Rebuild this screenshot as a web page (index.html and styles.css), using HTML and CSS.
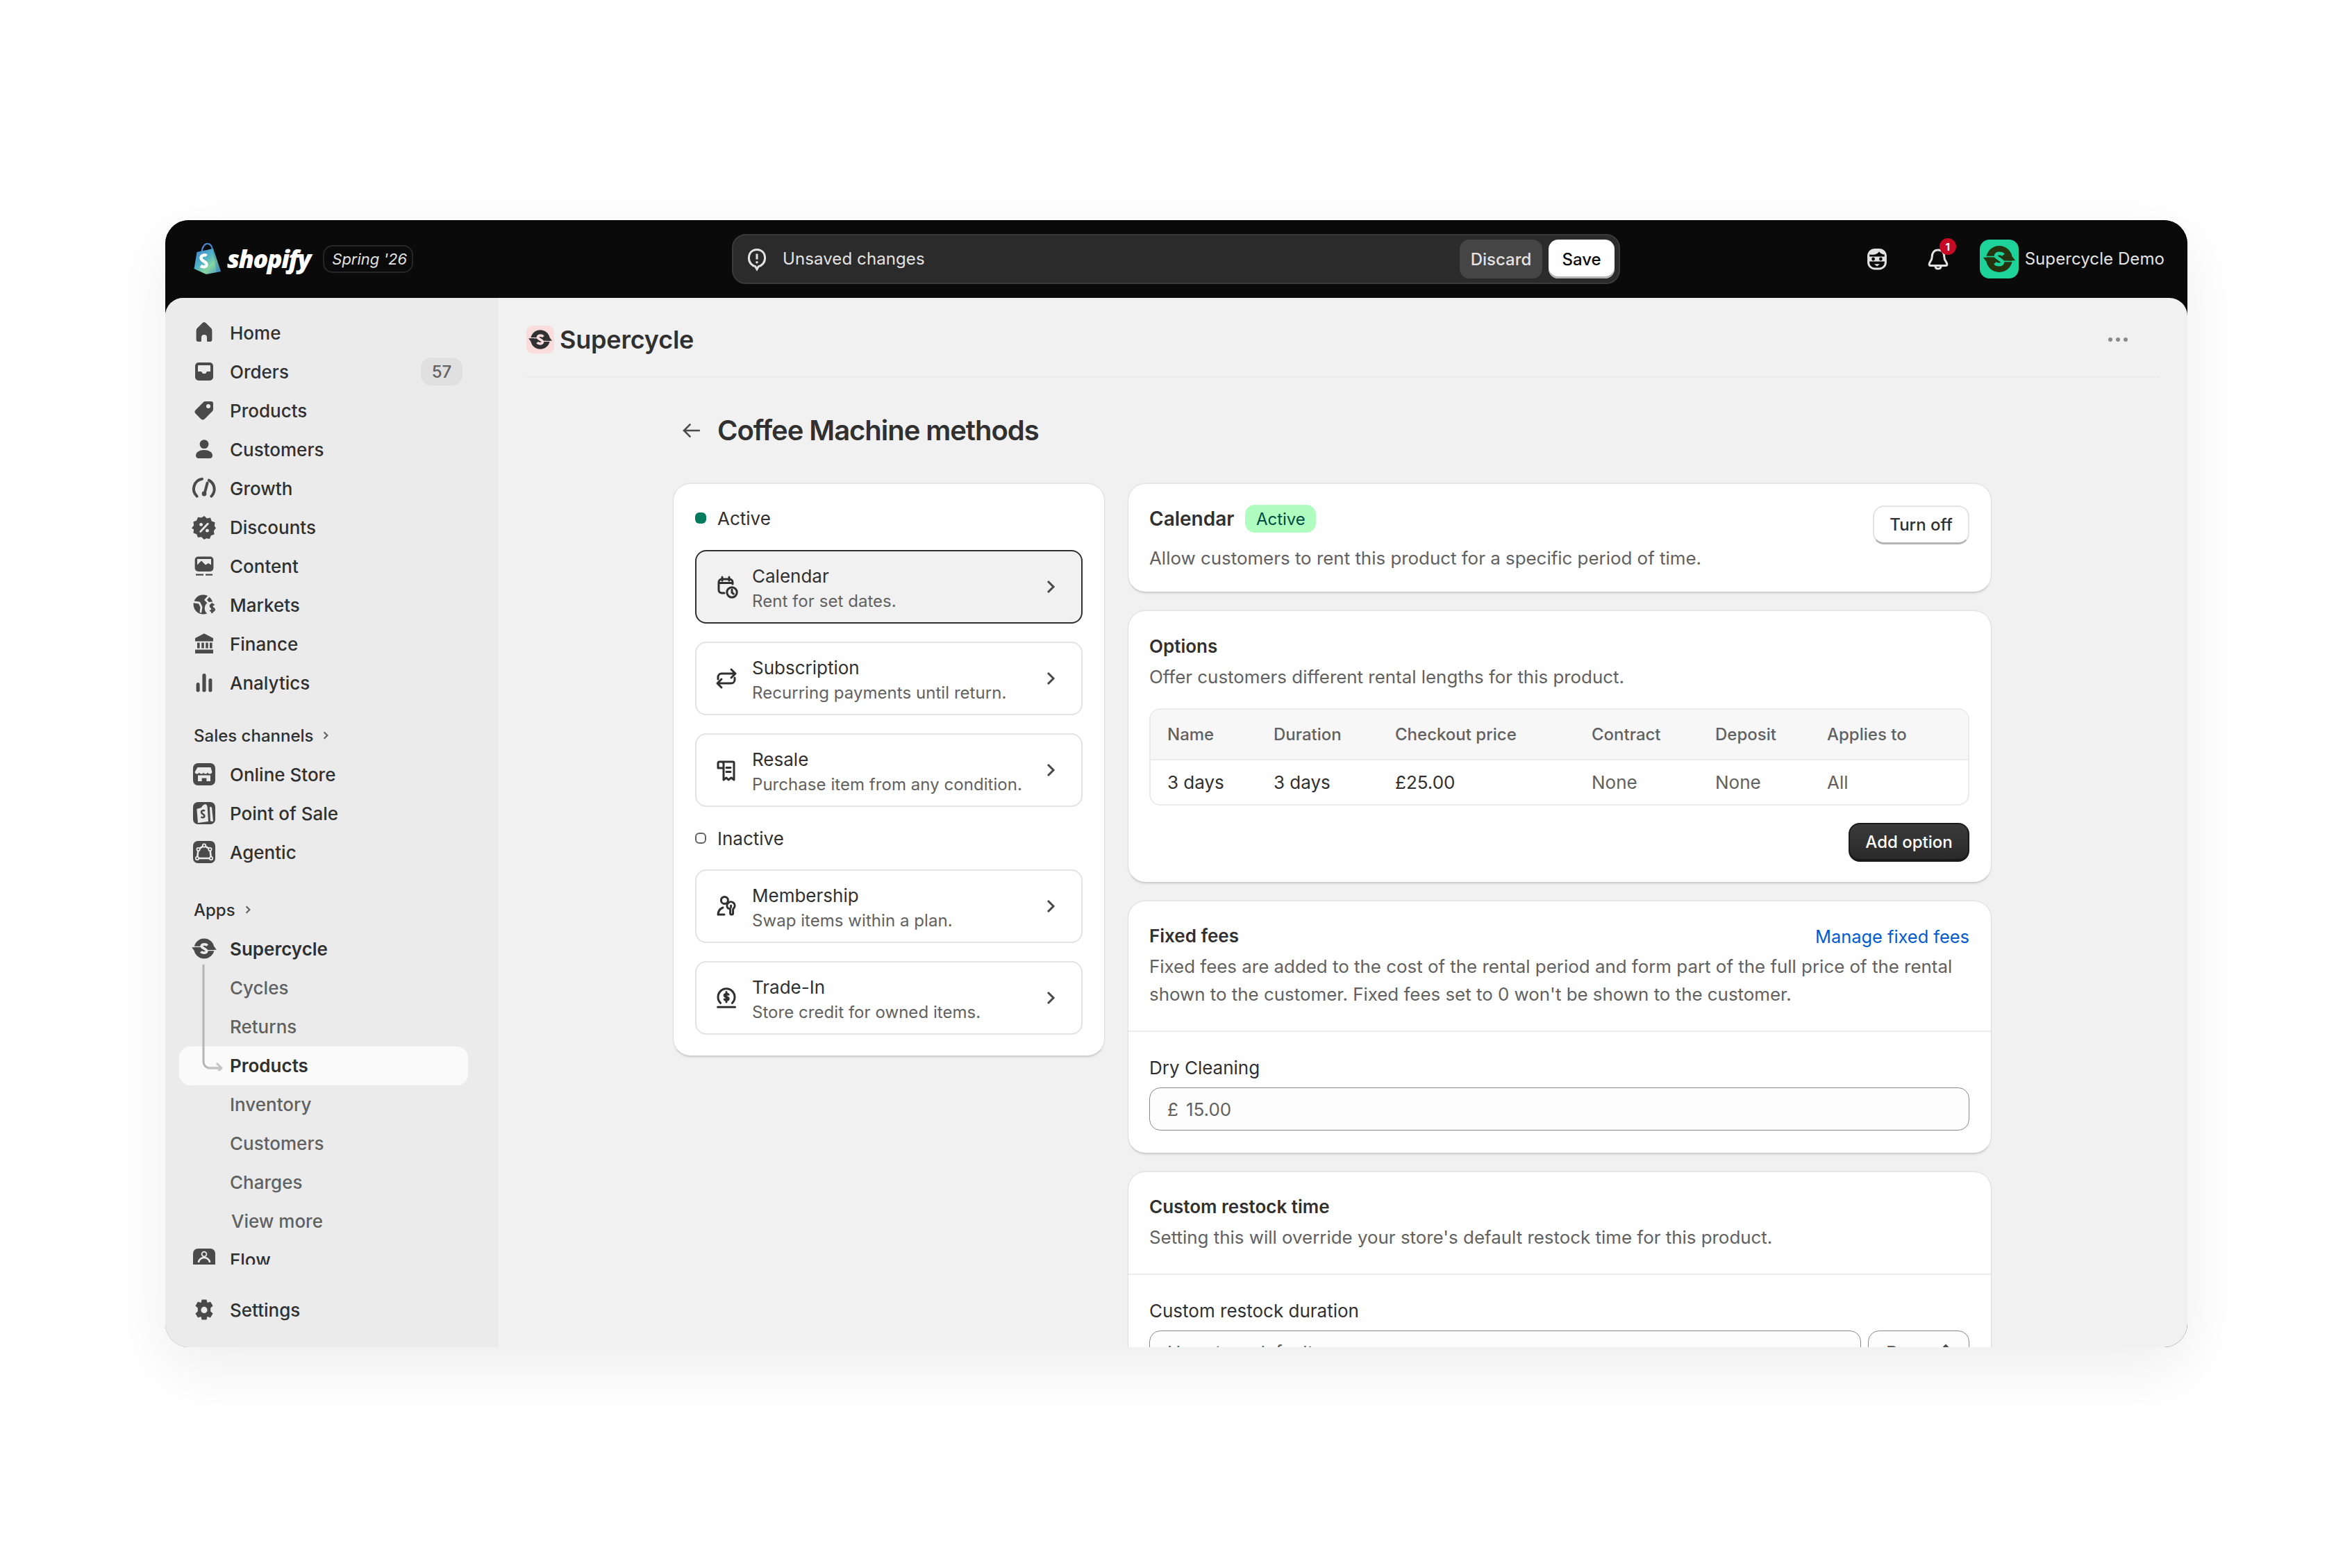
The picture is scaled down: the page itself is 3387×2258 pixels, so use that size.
FILE: index.html
```html
<!DOCTYPE html>
<html lang="en">
<head>
<meta charset="utf-8">
<title>Coffee Machine methods</title>
<link rel="stylesheet" href="styles.css">
</head>
<body>
<svg class="defs" width="0" height="0" aria-hidden="true">
  <defs>
    <linearGradient id="bag" x1="0" y1="0" x2="1" y2="1">
      <stop offset="0" stop-color="#3f7fd0"/><stop offset=".4" stop-color="#4fb0c8"/><stop offset=".65" stop-color="#86d6a0"/><stop offset="1" stop-color="#3c8fcc"/>
    </linearGradient>
    <symbol id="cycle" viewBox="0 0 20 20">
      <circle cx="10" cy="10" r="7.3" fill="var(--fg)"/>
      <path d="M12.300 7.800C11.300 6.600 8.800 6.600 8.200 7.900 7.800 9 9.500 9.600 10 10c.5.400 2.200 1 1.800 2.100-.6 1.300-3.100 1.300-4.100.1" fill="none" stroke="var(--bg)" stroke-width="1.900"/>
      <path d="M1 8.700H9.500M10.500 11.300H19" stroke="var(--bg)" stroke-width=".65"/>
      <path d="M1.100 9.100H5.400L4 11.200H2.600zM18.900 10.900H14.600L16 8.800H17.400z" fill="var(--fg)"/>
    </symbol>
  </defs>
</svg>
<main class="stage">
<div class="window">
  <header class="topbar">
    <div class="brand">
      <svg class="bag" viewBox="0 0 40 46"><path d="M11.500 14C12 5 16 1 19.500 1c4 0 6.500 3 7.500 8" fill="none" stroke="#4a86d0" stroke-width="2.200"/><path d="M4.500 13 28 8 39 41 18 45 .5 37z" fill="url(#bag)"/><path d="M28 8 39 41 33 42 27 9z" fill="#2a6db0" opacity=".35"/><path d="M18.500 18.500c-2-2-8-1.500-8 3 0 5 8 4.500 8 9.500 0 4-5 4-8.500 2" fill="none" stroke="#fff" stroke-width="4.400"/></svg>
      <span class="wordmark">shopify</span>
      <span class="edition">Spring '26</span>
    </div>
    <div class="savebar">
      <svg class="ic-sm" viewBox="0 0 20 20"><path d="M10 3.200c3.400 0 5.800 2.400 5.800 6.200 0 3.200-2.300 5.400-4.600 5.900L10 17.400l-1.200-2.100c-2.300-.5-4.600-2.700-4.600-5.900 0-3.800 2.400-6.200 5.800-6.200z" fill="none" stroke="#e3e3e3" stroke-width="1.500"/><path d="M10 6.300v4" stroke="#e3e3e3" stroke-width="1.500"/><circle cx="10" cy="12.400" r=".9" fill="#e3e3e3"/></svg>
      <span class="savebar-text">Unsaved changes</span>
      <button class="bar-btn bar-discard">Discard</button>
      <button class="bar-btn bar-save">Save</button>
    </div>
    <div class="top-right">
      <svg class="top-ic" viewBox="0 0 20 20"><rect x="3.800" y="3.200" width="12.400" height="13.800" rx="4.600" fill="none" stroke="#e3e3e3" stroke-width="1.500"/><path d="M4.500 6.600c3 .9 6-.2 7-2 .7 1.400 2.300 2 4 2.200V5L13 3.200H7L4.500 5z" fill="#e3e3e3"/><path d="M4 8.200h12v3.600H4z" fill="#e3e3e3"/><circle cx="7.300" cy="10" r="1.200" fill="#0a0a0a"/><circle cx="12.700" cy="10" r="1.200" fill="#0a0a0a"/><path d="M8 13.600h4l-2 1.600z" fill="#e3e3e3"/></svg>
      <span class="bell">
        <svg class="top-ic" viewBox="0 0 20 20"><path d="M10 3.500c-3 0-4.400 2.200-4.400 5 0 2.800-2 3.600-2 5.200 0 .6.400 1 1 1h10.800c.6 0 1-.4 1-1 0-1.600-2-2.400-2-5.200 0-2.800-1.400-5-4.400-5zM8 15c0 1.300.9 2 2 2s2-.7 2-2" fill="none" stroke="#e3e3e3" stroke-width="1.500"/></svg>
        <span class="bell-count">1</span>
      </span>
      <span class="avatar"><svg class="cycle-lg"><use href="#cycle"/></svg></span>
      <span class="store-name">Supercycle Demo</span>
    </div>
  </header>
  <div class="shell">
    <aside class="sidebar">
      <nav class="nav-scroll">
        <a class="nav-row"><svg class="nav-ic" viewBox="0 0 20 20"><path d="M8.700 3.100a2 2 0 0 1 2.600 0l3.300 3.300a2.500 2.500 0 0 1 1.100 2V15a1.500 1.500 0 0 1-1.500 1.500h-1.700a.5.500 0 0 1-.5-.5v-2.500a2 2 0 0 0-4 0V16a.5.500 0 0 1-.5.500H5.800A1.500 1.500 0 0 1 4.300 15V8.400a2.500 2.500 0 0 1 1.100-2z"/></svg><span class="nav-label">Home</span></a>
        <a class="nav-row"><svg class="nav-ic" viewBox="0 0 20 20"><path fill-rule="evenodd" d="M6 3.500h8A2.500 2.500 0 0 1 16.500 6v8a2.500 2.500 0 0 1-2.500 2.500H6A2.500 2.500 0 0 1 3.500 14V6A2.500 2.500 0 0 1 6 3.500zM5.500 10H8l1 1.500h2l1-1.500h2.500V6a.5.500 0 0 0-.5-.5H6a.5.500 0 0 0-.5.500z"/></svg><span class="nav-label">Orders</span><span class="nav-count">57</span></a>
        <a class="nav-row"><svg class="nav-ic" viewBox="0 0 20 20"><path fill-rule="evenodd" d="M15 3.500h-4.200a2 2 0 0 0-1.400.6L3.900 9.600a2 2 0 0 0 0 2.800l3.700 3.700a2 2 0 0 0 2.800 0l5.500-5.500a2 2 0 0 0 .6-1.400V5A1.500 1.500 0 0 0 15 3.500zM13 8.500a1.500 1.500 0 1 1 0-3 1.500 1.500 0 0 1 0 3z"/></svg><span class="nav-label">Products</span></a>
        <a class="nav-row"><svg class="nav-ic" viewBox="0 0 20 20"><circle cx="10" cy="6.300" r="3.200"/><path d="M4 14.500c0-2.500 2.700-4 6-4s6 1.500 6 4c0 1.100-.7 2-1.800 2H5.800C4.700 16.500 4 15.600 4 14.500z"/></svg><span class="nav-label">Customers</span></a>
        <a class="nav-row"><svg class="nav-ic nav-stroke" viewBox="0 0 20 20"><path d="M4.800 15.800A7.200 7.200 0 0 1 8.500 3.400M15.200 15.800a7.200 7.200 0 0 0-1.800-11.500"/><path d="M12.300 6.300 10.500 13"/><circle class="nav-solid" cx="10" cy="14" r="1.700"/></svg><span class="nav-label">Growth</span></a>
        <a class="nav-row"><svg class="nav-ic" viewBox="0 0 20 20"><path d="M10 2l2 1.700 2.500-.4.900 2.400 2.400.9-.4 2.500L18.500 10.800l-1.600 1.900.4 2.500-2.400.9-.9 2.400-2.500-.4L10 19l-2-1.900-2.500.4-.9-2.400-2.400-.9.400-2.500L1 10.800l1.600-2.100-.4-2.500 2.400-.9.900-2.400 2.500.4z"/><path class="nav-cut" d="M12.600 7.600 7.400 13.200"/><circle class="nav-dot" cx="7.800" cy="8.200" r="1.200"/><circle class="nav-dot" cx="12.200" cy="12.600" r="1.200"/></svg><span class="nav-label">Discounts</span></a>
        <a class="nav-row"><svg class="nav-ic" viewBox="0 0 20 20"><rect x="3.300" y="3.200" width="13.400" height="10.800" rx="2.500"/><path class="nav-dot" d="M5 5h10v4.300L13 8l-2 1.200-3-3-3 3z"/><path d="M4 15.700h5.500v1.200H4zM11 15.700h5v1.200h-5z"/></svg><span class="nav-label">Content</span></a>
        <a class="nav-row nav-markets"><svg class="nav-ic" viewBox="0 0 20 20"><circle cx="9.300" cy="9.800" r="7"/><path class="nav-cut" d="M13.500 3.500 11 6.500l2 2M3 8l3.500.5 1.500 3-.5 3.500"/><circle class="nav-dot" cx="15" cy="12.500" r="4.700"/><path class="nav-line" d="M17.200 10.300c-.5-.7-2.700-.9-2.700.6 0 1.600 2.800.9 2.800 2.500 0 1.500-2.500 1.200-3 .4M15.700 8.800v7.200"/></svg><span class="nav-label">Markets</span></a>
        <a class="nav-row"><svg class="nav-ic" viewBox="0 0 20 20"><path d="M10 2.600 16.500 6v2.300h-13V6zM3.500 14.200h13v2.800h-13zM5 9.300h1.800v4H5zM8.100 9.300h1.800v4H8.100zM11.100 9.300h1.800v4h-1.800zM14 9.300h1.800v4H14z"/></svg><span class="nav-label">Finance</span></a>
        <a class="nav-row"><svg class="nav-ic" viewBox="0 0 20 20"><rect x="4.300" y="10" width="2.500" height="6.800" rx="1.200"/><rect x="8.700" y="3.500" width="2.600" height="13.300" rx="1.200"/><rect x="13.200" y="7" width="2.500" height="9.800" rx="1.200"/></svg><span class="nav-label">Analytics</span></a>

        <div class="nav-head nav-head-sales"><span>Sales channels</span><svg class="nav-head-ic" viewBox="0 0 20 20"><path d="M8 6l4 4-4 4"/></svg></div>
        <a class="nav-row"><svg class="nav-ic" viewBox="0 0 20 20"><rect x="2" y="2" width="16" height="16" rx="3.500"/><path class="nav-dot" d="M5.300 5h9.400l1 3.300c0 1-.9 1.500-1.600 1.500-.8 0-1.300-.4-1.600-1-.4.600-1 1-1.500 1-.8 0-1.200-.4-1.500-1-.3.600-.8 1-1.500 1s-1.200-.4-1.600-1c-.3.600-.8 1-1.600 1-.7 0-1.600-.5-1.500-1.500z"/><path class="nav-dot" d="M5.500 10.800h9V15h-2.800v-2.200H8.300V15H5.500z"/></svg><span class="nav-label">Online Store</span></a>
        <a class="nav-row"><svg class="nav-ic" viewBox="0 0 20 20"><rect x="2" y="2" width="16" height="16" rx="3.500"/><path class="nav-dot" d="M8 6c.5-1.200 1.700-2.300 3-2.500.8.400 1.200 1.200 1.300 2l.7 10.500-7.500 1L4.700 7z"/><path class="nav-line nav-line-dark" d="M10.500 8.300c-1-.6-2.500-.3-2.500 1 0 1.500 2.200 1.300 2.200 2.700 0 1.300-1.500 1.300-2.500.8"/><path class="nav-dot" d="M14 5.500l1.500.2 1 10.300-2-.2z"/></svg><span class="nav-label">Point of Sale</span></a>
        <a class="nav-row"><svg class="nav-ic" viewBox="0 0 20 20"><rect x="2" y="2" width="16" height="16" rx="3.500"/><path class="nav-line" d="M10 5.300 5.800 8l-.8 6.500h10L14.200 8z"/><circle class="nav-ring" cx="10" cy="5.300" r="1.100"/><circle class="nav-ring" cx="5.800" cy="8" r="1.100"/><circle class="nav-ring" cx="14.200" cy="8" r="1.100"/><circle class="nav-ring" cx="5" cy="14.500" r="1.100"/><circle class="nav-ring" cx="15" cy="14.500" r="1.100"/></svg><span class="nav-label">Agentic</span></a>

        <div class="nav-head nav-head-apps"><span>Apps</span><svg class="nav-head-ic" viewBox="0 0 20 20"><path d="M8 6l4 4-4 4"/></svg></div>
        <div class="app-group">
          <a class="nav-row nav-strong"><svg class="nav-ic cycle-nav"><use href="#cycle"/></svg><span class="nav-label">Supercycle</span></a>
          <a class="nav-row nav-sub"><span class="nav-label">Cycles</span></a>
          <a class="nav-row nav-sub"><span class="nav-label">Returns</span></a>
          <a class="nav-row nav-sub nav-current"><span class="nav-label">Products</span></a>
          <a class="nav-row nav-sub"><span class="nav-label">Inventory</span></a>
          <a class="nav-row nav-sub"><span class="nav-label">Customers</span></a>
          <a class="nav-row nav-sub"><span class="nav-label">Charges</span></a>
          <a class="nav-row nav-sub nav-more"><span class="nav-label">View more</span></a>
          <svg class="tree" viewBox="0 0 30 154"><path class="tree-line" d="M2 1v140a9 9 0 0 0 9 9h17"/><path class="tree-line tree-light" d="M8 150h20M21 143l7 7-7 7"/></svg>
        </div>
        <a class="nav-row"><svg class="nav-ic" viewBox="0 0 20 20"><rect x="2" y="2" width="16" height="16" rx="3.500"/><circle class="nav-ring" cx="10" cy="6" r="1.700"/><path class="nav-line" d="M6 12c0-2 2-3.500 4-3.500s4 1.500 4 3.500"/></svg><span class="nav-label">Flow</span></a>
      </nav>
      <div class="nav-foot">
        <a class="nav-row"><svg class="nav-ic" viewBox="0 0 20 20"><path fill-rule="evenodd" d="M8.300 2.800h3.400l.6 2.200 2.200-.7 1.800 3-1.700 1.500v2.400l1.700 1.500-1.800 3-2.200-.7-.6 2.200H8.300l-.6-2.200-2.200.7-1.800-3 1.700-1.500V8.800L3.700 7.300l1.800-3 2.200.7zM10 12.500a2.300 2.300 0 1 0 0-4.600 2.300 2.300 0 0 0 0 4.600z"/></svg><span class="nav-label">Settings</span></a>
      </div>
    </aside>
    <section class="main">
      <div class="app-header">
        <span class="app-logo"><svg class="cycle-app"><use href="#cycle"/></svg></span>
        <h2 class="app-name">Supercycle</h2>
        <svg class="dots" viewBox="0 0 30 8"><circle cx="4" cy="4" r="3"/><circle cx="15" cy="4" r="3"/><circle cx="26" cy="4" r="3"/></svg>
      </div>
      <div class="page">
        <div class="title-row">
          <svg class="back" viewBox="0 0 20 20"><path d="M17 10H3.500M9 4.500 3.500 10 9 15.500"/></svg>
          <h1 class="title">Coffee Machine methods</h1>
        </div>
        <div class="columns">
          <div class="card methods">
            <div class="status"><span class="dot dot-on"></span>Active</div>
            <div class="method method-on">
              <svg class="method-ic" viewBox="0 0 20 20"><path d="M8.500 14.500H6.700a2.200 2.200 0 0 1-2.200-2.200V6.700a2.200 2.200 0 0 1 2.200-2.200h5.600a2.200 2.200 0 0 1 2.200 2.200V8M4.500 7.300h10M7 3v2.500M12 3v2.500"/><circle cx="14" cy="14" r="3.600"/><path d="M14 12v2.200l1.200.9"/></svg>
              <div class="method-text"><div class="method-name">Calendar</div><div class="method-desc">Rent for set dates.</div></div>
              <svg class="chev" viewBox="0 0 20 20"><path d="M7.500 5 12.500 10l-5 5"/></svg>
            </div>
            <div class="method">
              <svg class="method-ic" viewBox="0 0 20 20"><path d="M13.500 3.500 16.500 6.500l-3 3M4 10.500V9a2.500 2.500 0 0 1 2.500-2.500h10M6.500 16.500l-3-3 3-3M16 9.500V11a2.500 2.500 0 0 1-2.500 2.500h-10"/></svg>
              <div class="method-text"><div class="method-name">Subscription</div><div class="method-desc">Recurring payments until return.</div></div>
              <svg class="chev" viewBox="0 0 20 20"><path d="M7.500 5 12.500 10l-5 5"/></svg>
            </div>
            <div class="method">
              <svg class="method-ic" viewBox="0 0 20 20"><path d="M5.500 4h9.200a.8.800 0 0 1 .8.800V17l-2-1.500-2 1.500-1.500-1.500-2 1.500V5.500A1.500 1.500 0 0 0 6.500 4H5a1 1 0 0 0-1 1v3.500h3.500M10 8.200h3M10 11.200h3"/></svg>
              <div class="method-text"><div class="method-name">Resale</div><div class="method-desc">Purchase item from any condition.</div></div>
              <svg class="chev" viewBox="0 0 20 20"><path d="M7.500 5 12.500 10l-5 5"/></svg>
            </div>
            <div class="status status-off"><span class="dot dot-off"></span>Inactive</div>
            <div class="method">
              <svg class="method-ic" viewBox="0 0 20 20"><circle cx="8.700" cy="5.700" r="2.500"/><path d="M4 16h4.500M4 16c0-2 1.200-4 3.500-5"/><path d="M11 11.300a2.800 2.800 0 1 1 4.500 0l-.7.800v2.900a1 1 0 0 1-2 0v-2.900z"/><path d="M13.300 9.500v1.200"/></svg>
              <div class="method-text"><div class="method-name">Membership</div><div class="method-desc">Swap items within a plan.</div></div>
              <svg class="chev" viewBox="0 0 20 20"><path d="M7.500 5 12.500 10l-5 5"/></svg>
            </div>
            <div class="method">
              <svg class="method-ic" viewBox="0 0 20 20"><path d="M3.800 16.600h12.500M5.800 13.700a6 6 0 1 1 8.400 0M11.600 7.600c-.7-.8-3-.8-3 .6 0 1.500 3 .9 3 2.400 0 1.400-2.400 1.200-3 .5M10 5.800v7.200"/></svg>
              <div class="method-text"><div class="method-name">Trade-In</div><div class="method-desc">Store credit for owned items.</div></div>
              <svg class="chev" viewBox="0 0 20 20"><path d="M7.500 5 12.500 10l-5 5"/></svg>
            </div>
          </div>
          <div class="stack">
            <div class="card card-cal">
              <div class="cal-left">
                <div class="cal-title"><h3 class="card-title cal-name">Calendar</h3><span class="pill">Active</span></div>
                <p class="card-desc cal-desc">Allow customers to rent this product for a specific period of time.</p>
              </div>
              <button class="btn btn-plain">Turn off</button>
            </div>
            <div class="card card-opts">
              <h3 class="card-title">Options</h3>
              <p class="card-desc">Offer customers different rental lengths for this product.</p>
              <div class="table-wrap">
                <table class="table">
                  <colgroup><col class="c1"><col class="c2"><col class="c3"><col class="c4"><col class="c5"><col class="c6"></colgroup>
                  <thead><tr><th>Name</th><th>Duration</th><th>Checkout price</th><th>Contract</th><th>Deposit</th><th>Applies to</th></tr></thead>
                  <tbody><tr><td>3 days</td><td>3 days</td><td>£25.00</td><td class="muted">None</td><td class="muted">None</td><td class="muted">All</td></tr></tbody>
                </table>
              </div>
              <div class="opts-foot"><button class="btn btn-dark">Add option</button></div>
            </div>
            <div class="card card-split">
              <div class="sec sec-head">
                <div class="sec-title"><h3 class="card-title">Fixed fees</h3><a class="link">Manage fixed fees</a></div>
                <p class="card-desc">Fixed fees are added to the cost of the rental period and form part of the full price of the rental shown to the customer. Fixed fees set to 0 won't be shown to the customer.</p>
              </div>
              <div class="sec sec-body">
                <div class="label">Dry Cleaning</div>
                <div class="input"><span class="prefix">£</span><span>15.00</span></div>
              </div>
            </div>
            <div class="card card-split">
              <div class="sec sec-head">
                <h3 class="card-title">Custom restock time</h3>
                <p class="card-desc">Setting this will override your store's default restock time for this product.</p>
              </div>
              <div class="sec sec-body">
                <div class="label label-tight">Custom restock duration</div>
                <div class="input-row">
                  <div class="input input-grow"><span class="placeholder">Use store default</span></div>
                  <div class="input input-select"><span class="placeholder">Days</span><svg class="sel-ic" viewBox="0 0 20 20"><path d="M7 7l3-3 3 3M7 13l3 3 3-3"/></svg></div>
                </div>
              </div>
            </div>
          </div>
        </div>
      </div>
    </section>
  </div>
</div>
</main>
</body>
</html>
```

FILE: styles.css
```css
* { box-sizing: border-box; }
html, body { margin: 0; padding: 0; background: #fff; }
body { font-family: Inter, "Liberation Sans", sans-serif; color: #303030; width: 3387px; height: 2258px; overflow: hidden; }
h1, h2, h3, p { margin: 0; }
button { font: inherit; border: 0; padding: 0; }
.defs { position: absolute; }

.stage { padding: 317px 238px 0; height: 2258px; }
.window { width: 2912px; height: 1623px; border-radius: 34px; background: #0a0a0a; overflow: hidden; display: flex; flex-direction: column; box-shadow: 0 30px 90px rgba(0,0,0,.07); }

.topbar { height: 112px; flex: none; display: flex; align-items: center; position: relative; background: #0a0a0a; }
.brand { display: flex; align-items: center; padding-left: 41px; width: 816px; flex: none; }
.bag { width: 40px; height: 46px; flex: none; }
.wordmark { font-family: "Open Sans", sans-serif; font-style: italic; font-weight: 800; font-size: 36px; letter-spacing: -1.5px; color: #fff; margin-left: 8px; line-height: 46px; }
.edition { margin-left: 18px; height: 40px; width: 130px; padding-left: 5px; border: 2px solid #262626; border-radius: 14px; font-style: italic; font-size: 22px; color: #e3e3e3; display: flex; align-items: center; justify-content: center; }
.savebar { width: 1279px; height: 72px; flex: none; background: #2b2b2b; border: 2px solid #3a3a3a; border-radius: 20px; display: flex; align-items: center; padding: 0 6px 0 14px; }
.ic-sm { width: 40px; height: 40px; flex: none; }
.savebar-text { font-size: 24px; color: #e3e3e3; margin-left: 17px; flex: 1; letter-spacing: .1px; margin-top: -1px; }
.bar-btn { height: 56px; border-radius: 14px; font-size: 24px; font-weight: 500; }
.bar-discard { width: 119px; background: #454545; color: #e3e3e3; margin-right: 9px; }
.bar-save { width: 95px; background: #fff; color: #0a0a0a; box-shadow: inset 0 -3px 0 #b5b5b5; }
.top-right { display: flex; align-items: center; margin-left: auto; padding-right: 33px; }
.top-ic { width: 40px; height: 40px; display: block; }
.bell { position: relative; margin-left: 48px; margin-right: 40px; }
.bell-count { position: absolute; left: 22px; top: -10px; width: 24px; height: 24px; border-radius: 12px; background: #c70a24; color: #fff; font-size: 15px; font-weight: 700; display: flex; align-items: center; justify-content: center; }
.avatar { --fg: #26330f; --bg: #1dd39a; width: 56px; height: 56px; border-radius: 14px; background: #1dd39a; display: flex; align-items: center; justify-content: center; }
.cycle-lg { width: 52px; height: 52px; }
.store-name { margin-left: 9px; font-size: 24px; color: #e3e3e3; letter-spacing: .08px; margin-top: -1px; }

.shell { flex: 1; min-height: 0; display: flex; background: #f1f1f1; border-radius: 26px 26px 0 0; overflow: hidden; }
.sidebar { width: 480px; flex: none; background: #ebebeb; display: flex; flex-direction: column; }
.nav-scroll { flex: none; height: 1392px; overflow: hidden; padding-top: 23px; }
.nav-foot { padding-top: 38px; }
.nav-row { height: 56px; width: 416px; margin-left: 20px; padding: 0 8px 2px 16px; display: flex; align-items: center; font-size: 26px; font-weight: 450; color: #303030; border-radius: 16px; position: relative; }
.nav-ic { width: 40px; height: 40px; flex: none; fill: #4a4a4a; margin-right: 17px; }
.nav-label { flex: 1; }
.nav-count { width: 60px; height: 40px; background: #e0e0e0; border-radius: 15px; color: #616161; font-size: 24px; display: flex; align-items: center; justify-content: center; }
.nav-stroke { fill: none; stroke: #4a4a4a; stroke-width: 2; stroke-linecap: round; }
.nav-solid { fill: #4a4a4a; stroke: none; }
.nav-cut { fill: none; stroke: #ebebeb; stroke-width: 1.4; stroke-linecap: round; }
.nav-dot { fill: #ebebeb; }
.nav-line { fill: none; stroke: #ebebeb; stroke-width: 1.3; }
.nav-markets .nav-line { stroke: #4a4a4a; }
.nav-line-dark { stroke: #4a4a4a; }
.nav-ring { fill: #4a4a4a; stroke: #ebebeb; stroke-width: .9; }
.nav-head { height: 56px; margin-left: 41px; padding-bottom: 2px; display: flex; align-items: center; font-size: 24px; font-weight: 500; color: #303030; }
.nav-head-sales { margin-top: 20px; }
.nav-head-apps { margin-top: 27px; }
.nav-head-ic { width: 24px; height: 24px; margin-left: 6px; fill: none; stroke: #616161; stroke-width: 1.8; }
.app-group { position: relative; }
.cycle-nav { --fg: #4a4a4a; --bg: #ebebeb; }
.nav-strong { font-weight: 600; }
.nav-sub { padding-left: 73px; color: #616161; }
.nav-current { background: #fafafa; color: #303030; font-weight: 600; }
.nav-more { padding-left: 75px; }
.tree { position: absolute; left: 53px; top: 49px; width: 30px; height: 154px; fill: none; }
.tree-line { stroke: #b5b5b5; stroke-width: 3; fill: none; }
.tree-light { stroke: #c4c4c4; }

.main { flex: 1; min-width: 0; }
.app-header { height: 115px; margin: 0 40px; padding-top: 40px; display: flex; align-items: flex-start; border-bottom: 2px solid #ebebeb; }
.app-logo { --fg: #303030; --bg: #fbdcdc; width: 40px; height: 40px; background: #fbdcdc; border-radius: 9px; display: flex; align-items: center; justify-content: center; }
.cycle-app { width: 38px; height: 38px; }
.app-name { font-size: 36px; line-height: 40px; font-weight: 600; margin-left: 8px; flex: 1; color: #303030; letter-spacing: -.2px; }
.dots { width: 30px; height: 8px; margin: 16px 45px 0 0; fill: #8a8a8a; }
.page { margin-left: 251px; width: 1899px; padding-top: 52px; }
.title-row { display: flex; align-items: center; height: 48px; margin-bottom: 51px; padding-left: 10px; }
.back { width: 34px; height: 34px; flex: none; fill: none; stroke: #4a4a4a; stroke-width: 1.5; }
.title { font-size: 40px; line-height: 48px; font-weight: 600; margin-left: 20px; letter-spacing: -1.05px; color: #303030; }
.columns { display: flex; align-items: flex-start; gap: 33px; }
.card { background: #fff; border: solid #e6e6e6; border-width: 2px 1px; border-left-color: #dedede; border-right-color: #dedede; border-bottom-color: #d0d0d0; border-radius: 26px; box-shadow: 0 2px 2px rgba(0,0,0,.05); }
.methods { width: 622px; flex: none; padding: 29px 31px 30px; }
.status { display: flex; align-items: center; height: 40px; font-size: 26px; margin-bottom: 26px; color: #303030; }
.status-off { margin-top: -1px; margin-bottom: 25px; }
.dot { width: 16px; height: 16px; border-radius: 6px; margin-right: 16px; flex: none; }
.dot-on { background: #047b5d; }
.dot-off { border: 2px solid #616161; }
.method { height: 106px; border: 2px solid #e3e3e3; border-radius: 16px; display: flex; align-items: center; padding: 0 28px 0 23px; margin-bottom: 26px; }
.method:last-child { margin-bottom: 0; }
.method-on { background: #f1f1f1; border-color: #303030; }
.method-ic { width: 40px; height: 40px; flex: none; fill: none; stroke: #303030; stroke-width: 1.5; stroke-linecap: round; stroke-linejoin: round; }
.method-text { flex: 1; margin-left: 17px; align-self: flex-start; padding-top: 18px; }
.method-name { font-size: 26px; line-height: 36px; color: #303030; }
.method-desc { font-size: 24px; line-height: 36px; color: #616161; letter-spacing: .05px; }
.chev { width: 32px; height: 32px; flex: none; fill: none; stroke: #4a4a4a; stroke-width: 1.9; }
.stack { flex: 1; min-width: 0; display: flex; flex-direction: column; gap: 24px; }
.card-title { font-size: 26px; line-height: 40px; font-weight: 600; color: #303030; }
.cal-name { font-size: 28px; }
.card-desc { font-size: 25.9px; line-height: 40px; color: #616161; margin-top: 4px; }
.card-cal { height: 159px; padding: 30px 31px 28px 30px; display: flex; justify-content: space-between; align-items: flex-start; }
.cal-title { display: flex; align-items: center; }
.cal-desc { margin-top: 17px; }
.pill { margin-left: 16px; width: 102px; height: 40px; border-radius: 14px; background: #affebf; color: #014b40; font-size: 24px; display: flex; align-items: center; justify-content: center; }
.btn { height: 56px; border-radius: 16px; font-size: 24px; font-weight: 500; display: block; }
.btn-plain { width: 139px; margin-top: 1px; background: #fff; color: #303030; border: 2px solid #e3e3e3; border-bottom: 3px solid #b5b5b5; }
.btn-dark { width: 174px; background: linear-gradient(#3a3a3a, #2a2a2a); color: #fff; border: 2px solid #1a1a1a; border-bottom-width: 4px; }
.card-opts { padding: 31px 31px 29px 30px; }
.table-wrap { margin-top: 25px; width: 1181px; height: 140px; border: 2px solid #ebebeb; border-radius: 16px; overflow: hidden; }
.table { border-collapse: collapse; table-layout: fixed; width: 1177px; }
.c1 { width: 153px; } .c2 { width: 175px; } .c3 { width: 283px; } .c4 { width: 178px; } .c5 { width: 161px; } .c6 { width: 227px; }
.table th { height: 72px; background: #f7f7f7; border-bottom: 2px solid #ebebeb; text-align: left; font-size: 24px; font-weight: 500; color: #616161; padding: 0 0 0 24px; }
.table td { height: 64px; font-size: 26px; color: #303030; padding: 0 0 0 24px; }
.table td.muted { color: #616161; }
.opts-foot { margin-top: 25px; display: flex; justify-content: flex-end; }
.card-split { overflow: hidden; }
.sec { padding: 0 31px 0 30px; }
.sec-head { padding-top: 30px; padding-bottom: 32px; border-bottom: 2px solid #ebebeb; }
.sec-body { padding-top: 32px; padding-bottom: 32px; }
.sec-title { display: flex; justify-content: space-between; align-items: center; }
.link { color: #005bd3; font-size: 25.4px; }
.label { font-size: 26px; line-height: 40px; color: #303030; margin-bottom: 8px; }
.label-tight { margin-bottom: 8px; }
.input { height: 62px; background: #fdfdfd; border: 1px solid #8a8a8a; border-radius: 16px; display: flex; align-items: center; padding: 0 25px; font-size: 26px; color: #616161; }
.prefix { margin-right: 11px; }
.input-row { display: flex; gap: 10px; }
.input-grow { flex: 1; }
.input-select { width: 146px; justify-content: space-between; }
.sel-ic { width: 32px; height: 32px; margin-right: -8px; fill: none; stroke: #4a4a4a; stroke-width: 1.6; }
```
